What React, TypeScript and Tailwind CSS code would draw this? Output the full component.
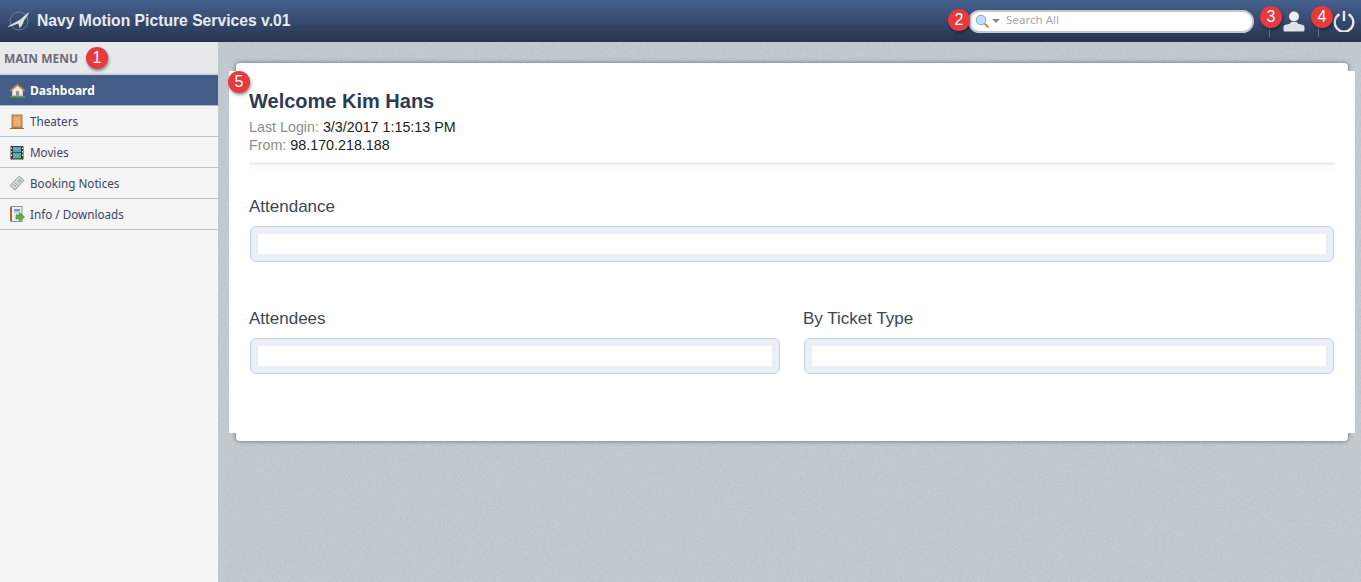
const menuText = { fontFamily: '"Noto Sans", sans-serif' };

function Badge({ n, className }: { n: number; className: string }) {
  return (
    <span
      className={`absolute z-20 flex h-[22px] w-[22px] items-center justify-center rounded-full bg-[#e8393f] text-[16px] leading-none text-white shadow-[1px_2px_3px_rgba(0,0,0,0.4)] ${className}`}
    >
      {n}
    </span>
  );
}

function HomeIcon() {
  return (
    <svg width="17" height="16" viewBox="0 0 16 15">
      <rect x="1" y="13" width="14" height="1.5" fill="#5da33c" />
      <path d="M3 7.5 8 3.5l5 4V13H3z" fill="#f3ead8" />
      <rect x="6.5" y="8.5" width="3" height="4.5" fill="#8a8f98" />
      <path d="M.5 8 8 1.5 15.5 8l-1.2.6L8 3.6 1.7 8.6z" fill="#c98a45" />
    </svg>
  );
}

function DoorIcon() {
  return (
    <svg width="16" height="15" viewBox="0 0 16 15">
      <rect x="3" y="1" width="10" height="12.5" fill="#d99a5b" stroke="#b5793f" />
      <rect x="5" y="3" width="6" height="9" fill="#e5b078" />
      <circle cx="10.8" cy="8" r="0.8" fill="#f4d35e" />
      <rect x="1" y="14" width="14" height="1" fill="#9a6a3a" />
    </svg>
  );
}

function FilmIcon() {
  return (
    <svg width="14" height="15" viewBox="0 0 14 15">
      <rect x="0.5" y="1" width="13" height="13.5" fill="#3b3b3b" />
      <rect x="3" y="2" width="8" height="5.2" fill="#58b368" />
      <path d="M3 2h8v2.4L6 6 3 4z" fill="#59a8dc" />
      <rect x="3" y="8.2" width="8" height="5.2" fill="#58b368" />
      <path d="M3 8.2h8v2L6 12l-3-1.5z" fill="#59a8dc" />
      <g fill="#e5e5e5">
        <rect x="1" y="2.5" width="1" height="1.5" />
        <rect x="1" y="6" width="1" height="1.5" />
        <rect x="1" y="9.5" width="1" height="1.5" />
        <rect x="12" y="2.5" width="1" height="1.5" />
        <rect x="12" y="6" width="1" height="1.5" />
        <rect x="12" y="9.5" width="1" height="1.5" />
      </g>
    </svg>
  );
}

function TicketIcon() {
  return (
    <svg width="16" height="16" viewBox="0 0 16 16">
      <path d="M10 1.2 15 5.4 6 15 1 10.6z" fill="#d4d6d9" stroke="#9a9da2" />
      <path d="m10.5 4 2 1.8-1.8 1.9-2-1.8z" fill="#8fb7de" />
      <path d="m4.5 9.5 2.5 2.2M6 8l2.5 2.2" stroke="#9a9da2" />
    </svg>
  );
}

function InfoIcon() {
  return (
    <svg width="16" height="17" viewBox="0 0 16 17">
      <rect x="2" y="0.5" width="11" height="15" fill="#eef1f5" stroke="#8b8f96" />
      <rect x="1" y="1" width="2" height="14" fill="#b5613c" />
      <rect x="5" y="3" width="6" height="2.5" fill="#6d9ad0" />
      <rect x="5" y="6.5" width="6" height="1" fill="#a9b2bf" />
      <path d="M7 9h3.5V6.8L15.5 11l-5 4.2V13H7z" fill="#62ae45" stroke="#3f8a2c" strokeWidth="0.7" />
    </svg>
  );
}

function LogoIcon() {
  return (
    <svg width="23" height="20" viewBox="0 0 23 20">
      <circle cx="12" cy="10" r="9" fill="none" stroke="#6f819e" strokeWidth="1" />
      <path d="M.5 16C5 12 12 10.500 16 6l6-5c-1 3.500-3 6-5 8.500-.6 3-2.500 6-4.500 8-.3-2-.6-3.500-1.300-5C8 13.500 4 15.500.5 16z" fill="#d9dee6" />
    </svg>
  );
}

function SearchIcon() {
  return (
    <svg width="15" height="15" viewBox="0 0 15 15">
      <path d="m9.500 9.500 4 4" stroke="#c98a45" strokeWidth="2" />
      <circle cx="6" cy="6" r="4.800" fill="#c4dcf5" stroke="#7fa8d8" />
    </svg>
  );
}

function UserIcon() {
  return (
    <svg width="22" height="22" viewBox="0 0 22 22">
      <circle cx="11" cy="6.500" r="5" fill="#eef0f3" />
      <path d="M8 12h6c.5 1.500 1.500 2 4 2.500 2 .4 3.500 1 3.500 2.500v3c0 .8-.6 1.500-1.500 1.500H2c-.9 0-1.500-.7-1.500-1.500v-3c0-1.500 1.500-2.100 3.500-2.500 2.500-.5 3.500-1 4-2.500z" fill="#dfe2e6" />
    </svg>
  );
}

function PowerIcon() {
  return (
    <svg width="22" height="22" viewBox="0 0 22 22" fill="none" stroke="#e4e8ee" strokeWidth="2.4">
      <path d="M6.500 4.200a9.300 9.300 0 1 0 9 0" />
      <path d="M11 1v10" />
    </svg>
  );
}

function PaperTexture() {
  return (
    <svg className="absolute inset-0 h-full w-full" aria-hidden="true">
      <filter id="paper-noise">
        <feTurbulence type="fractalNoise" baseFrequency="0.55" numOctaves="3" seed="4" />
        <feColorMatrix values="0 0 0 0 0.35  0 0 0 0 0.4  0 0 0 0 0.45  0.9 0 0 0 -0.3" />
      </filter>
      <rect width="100%" height="100%" filter="url(#paper-noise)" opacity="0.55" />
    </svg>
  );
}

function ChartBox() {
  return (
    <div className="mx-[1px] h-[36px] rounded-[6px] border border-[#c6d1e4] bg-[#e9eef7] px-[7px] py-[7px]">
      <div className="h-[20px] bg-white" />
    </div>
  );
}

const menu = [
  { label: "Theaters", icon: <DoorIcon /> },
  { label: "Movies", icon: <FilmIcon /> },
  { label: "Booking Notices", icon: <TicketIcon /> },
  { label: "Info / Downloads", icon: <InfoIcon /> },
];

export default function App() {
  return (
    <div className="relative flex h-[582px] w-[1361px] flex-col overflow-hidden bg-[#c4ccd2]" style={{ fontFamily: '"Liberation Sans", Arial, sans-serif' }}>
      {/* Header */}
      <header className="flex h-[42px] shrink-0 items-center bg-gradient-to-b from-[#46628f] to-[#27344e] pl-[7px] pr-[6px]">
        <LogoIcon />
        <span className="ml-[7px] text-[15.700px] font-bold text-[#e6ebf3]">Navy Motion Picture Services v.01</span>
        <div className="ml-auto flex h-[23px] w-[286px] items-center rounded-full border-2 border-[#c3c8d0] bg-white pl-[5px]">
          <SearchIcon />
          <span className="ml-[2px] h-0 w-0 border-x-[4px] border-t-[4px] border-x-transparent border-t-[#8a8a8a]" />
          <span className="ml-[6px] pb-[2px] text-[11.600px] text-[#a3a7ad]" style={menuText}>Search All</span>
        </div>
        <div className="ml-[29px]"><UserIcon /></div>
        <div className="ml-[28px]"><PowerIcon /></div>
      </header>

      <div className="flex min-h-0 flex-1">
        {/* Sidebar */}
        <aside className="w-[218px] shrink-0 bg-[#f5f5f5]" style={menuText}>
          <div className="flex h-[33px] items-center border-b-2 border-[#d3d6da] bg-[#e8e9ec] pl-[4px] pt-[2px] text-[12px] font-bold text-[#6d6b78]">MAIN MENU</div>
          <div className="flex h-[31px] items-center gap-[4px] border-b border-[#b5bec8] bg-[#435d88] pl-[9px] text-[12px] font-bold text-white">
            <HomeIcon />
            <span className="pt-[1px]">Dashboard</span>
          </div>
          {menu.map((item) => (
            <div key={item.label} className="flex h-[31px] items-center border-b border-[#bcc4cc] text-[11.700px] text-[#3b4563]">
              <span className="flex w-[30px] justify-center pl-[5px] pr-[1px]">{item.icon}</span>
              <span className="leading-[14px]">{item.label}</span>
            </div>
          ))}
        </aside>

        {/* Content */}
        <main className="relative min-w-0 flex-1 pl-[11px] pr-[6px] pt-[21px]">
          <PaperTexture />
          <div className="relative h-[378px] w-[1126px]">
            <div className="absolute inset-y-0 inset-x-[7px] rounded-[4px] bg-white shadow-[0_0_4px_rgba(60,70,80,0.8)]" />
            <div className="absolute inset-x-0 inset-y-[8px] bg-white" />
            <div className="relative px-[20px] pt-[26px]">
              <h1 className="text-[20px] font-bold leading-[24px] text-[#2f3b52]">Welcome Kim Hans</h1>
              <p className="mt-[5px] text-[14.300px] leading-[18px] text-[#8c8c8c]">
                Last Login: <span className="text-[#222]">3/3/2017 1:15:13 PM</span>
              </p>
              <p className="text-[14.300px] leading-[18px] text-[#8c8c8c]">
                From: <span className="text-[#222]">98.170.218.188</span>
              </p>
              <div className="mt-[9px] h-[8px] border-t border-[#e3e3e3] bg-gradient-to-b from-[#f7f7f7] to-white" />

              <h2 className="mt-[25px] text-[17px] leading-[22px] text-[#3d4656]">Attendance</h2>
              <div className="mt-[8px]"><ChartBox /></div>

              <div className="mt-[46px] grid grid-cols-2 gap-[22px]">
                <div>
                  <h2 className="text-[17px] leading-[22px] text-[#3d4656]">Attendees</h2>
                  <div className="mt-[8px]"><ChartBox /></div>
                </div>
                <div>
                  <h2 className="text-[17px] leading-[22px] text-[#3d4656]">By Ticket Type</h2>
                  <div className="mt-[8px]"><ChartBox /></div>
                </div>
              </div>
            </div>
          </div>
        </main>
      </div>

      {/* Numbered callouts */}
      <Badge n={1} className="left-[86px] top-[47px]" />
      <Badge n={2} className="left-[948px] top-[9px]" />
      <Badge n={3} className="left-[1260px] top-[6px]" />
      <Badge n={4} className="left-[1311px] top-[6px]" />
      <Badge n={5} className="left-[228px] top-[71px]" />
      <span className="absolute left-[1269px] top-[27px] z-10 h-[10px] w-px bg-[#5a7199]" />
      <span className="absolute left-[1318px] top-[27px] z-10 h-[10px] w-px bg-[#5a7199]" />
    </div>
  );
}
